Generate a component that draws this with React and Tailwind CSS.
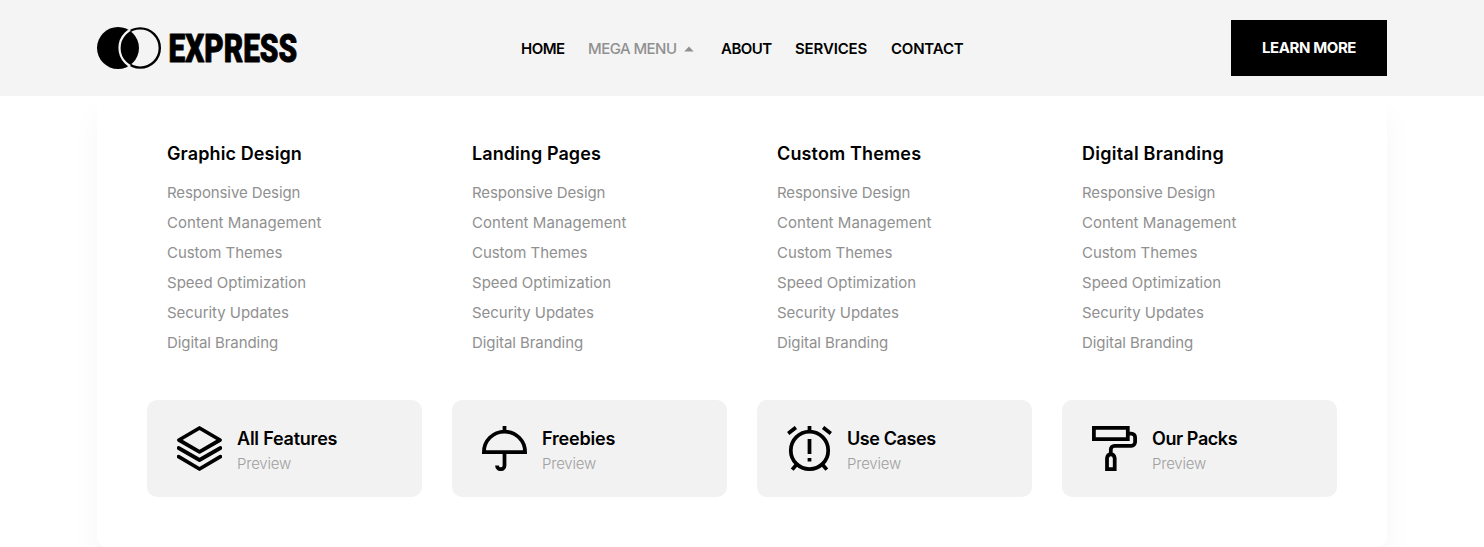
const columns = [
  ['Graphic Design', 'tracking-[0.12px]'],
  ['Landing Pages', 'tracking-[0.08px]'],
  ['Custom Themes', 'tracking-[0.14px]'],
  ['Digital Branding', 'tracking-[0.24px]'],
];

const links = [
  ['Responsive Design', 'tracking-[-0.1px]'],
  ['Content Management', 'tracking-[0.07px]'],
  ['Custom Themes', 'tracking-[-0.04px]'],
  ['Speed Optimization', 'tracking-[0.02px]'],
  ['Security Updates', 'tracking-[-0.04px]'],
  ['Digital Branding', 'tracking-[-0.07px]'],
];

function Icon({ children }) {
  return (
    <svg className="size-[45px] shrink-0" viewBox="0 0 45 45" fill="none" stroke="black" strokeWidth="3.75">
      {children}
    </svg>
  );
}

const LayersIcon = () => (
  <Icon>
    <g strokeLinejoin="round" strokeLinecap="round">
      <path d="M22.5 2 43 14 22.5 25.8 2 14Z" />
      <path d="M1.6 22 22.5 34 43.4 22" />
      <path d="M1.6 30.6 22.5 43 43.4 30.6" />
    </g>
  </Icon>
);

const UmbrellaIcon = () => (
  <Icon>
    <path d="M22.5 0V5" />
    <path d="M1.9 26.1A20.6 20.6 0 0 1 43.1 26.1Z" />
    <path d="M22.5 26V39.4A3.75 3.75 0 0 1 15 39.4" />
  </Icon>
);

const AlarmIcon = () => (
  <Icon>
    <circle cx="22.5" cy="24.4" r="18.7" />
    <path d="M22.5 0V5M22.5 13.1V28.1M22.5 31.9V35.6" />
    <path d="M1.2 7.4 8.9 1.4M43.8 7.4 36.1 1.4M5.2 43.6 9.8 38.2M39.8 43.6 35.2 38.2" />
  </Icon>
);

const RollerIcon = () => (
  <Icon>
    <path d="M1.9 1.9H35.8V13.1H1.9Z" />
    <path d="M36 7.5H39.4A3.75 3.75 0 0 1 43.1 11.2V16A3.75 3.75 0 0 1 39.4 19.8H22.5A3.75 3.75 0 0 0 18.8 23.5V28" />
    <path d="M15 43.1V32.2A3.9 4.6 0 0 1 22.7 32.2V43.1Z" />
  </Icon>
);

const cards = [
  ['All Features', LayersIcon, 'tracking-[-0.22px]'],
  ['Freebies', UmbrellaIcon, 'tracking-[-0.2px]'],
  ['Use Cases', AlarmIcon, 'tracking-[-0.4px]'],
  ['Our Packs', RollerIcon, 'tracking-[-0.42px]'],
];

function Logo() {
  return (
    <svg className="h-[42px] w-[204px] overflow-visible" viewBox="0 0 204 42">
      <defs>
        <clipPath id="disc">
          <circle cx="21" cy="21" r="21.5" />
        </clipPath>
      </defs>
      <circle cx="43.2" cy="21" r="19.6" fill="none" stroke="black" strokeWidth="2.4" />
      <circle cx="21" cy="21" r="21" />
      <circle cx="43.2" cy="21" r="20.7" fill="none" stroke="#f4f4f4" strokeWidth="2.2" clipPath="url(#disc)" />
      <text x="71.6" y="35" fontFamily="Roboto, sans-serif" fontWeight="900" fontSize="38.8" textLength="128.6" lengthAdjust="spacingAndGlyphs" stroke="black" strokeWidth="0.9" strokeLinejoin="round">
        EXPRESS
      </text>
    </svg>
  );
}

export default function App() {
  return (
    <div className="h-[547px] overflow-hidden bg-white font-['Inter',sans-serif] text-black">
      <header className="relative z-10 h-24 bg-[#f4f4f4]">
        <div className="mx-auto flex h-full w-[1290px] items-center">
          <Logo />
          <nav className="ml-[220px] flex items-center pt-0.5 text-[15px] leading-6 font-semibold whitespace-nowrap">
            <a className="w-[67px] tracking-[-0.5px]">HOME</a>
            <a className="flex w-[133px] items-center font-medium text-[#909090]">
              <span className="w-24 tracking-[-0.55px]">MEGA MENU</span>
              <svg className="h-1.5 w-2.5" viewBox="0 0 10 6"><path d="M0.3 5.6 5 0.6 9.7 5.6Z" fill="#909090" /></svg>
            </a>
            <a className="w-[74px] tracking-[-0.5px]">ABOUT</a>
            <a className="w-24 tracking-[-0.14px]">SERVICES</a>
            <a className="tracking-[-0.2px]">CONTACT</a>
          </nav>
          <button className="ml-auto h-14 w-[156px] bg-black text-[15px] font-bold tracking-[-0.4px] whitespace-nowrap text-white">LEARN MORE</button>
        </div>
      </header>
      <main className="mx-auto h-[451px] w-[1290px] rounded-b-[10px] bg-white px-[50px] pt-11 shadow-[0_18px_30px_rgba(0,0,0,0.04)]">
        <div className="grid grid-cols-4 gap-[30px]">
          {columns.map(([title, spacing]) => (
            <section key={title} className="h-[260px] px-5 whitespace-nowrap">
              <h2 className={`mb-2.5 text-[18px] leading-7 font-semibold ${spacing}`}>{title}</h2>
              <ul className="text-[15px] leading-[30px] text-[#909090]">
                {links.map(([label, tracking]) => (
                  <li key={label}><a className={tracking}>{label}</a></li>
                ))}
              </ul>
            </section>
          ))}
          {cards.map(([title, CardIcon, tracking]) => (
            <section key={title} className="-mt-[30px] flex h-[97px] items-center gap-[15px] rounded-[10px] bg-[#f2f2f2] pl-[30px] whitespace-nowrap">
              <CardIcon />
              <div className="pt-1">
                <h3 className={`text-[18px] leading-[25px] font-semibold ${tracking}`}>{title}</h3>
                <p className="text-[15px] leading-[25px] font-light tracking-[-0.2px] text-[#a0a0a0]">Preview</p>
              </div>
            </section>
          ))}
        </div>
      </main>
    </div>
  );
}
